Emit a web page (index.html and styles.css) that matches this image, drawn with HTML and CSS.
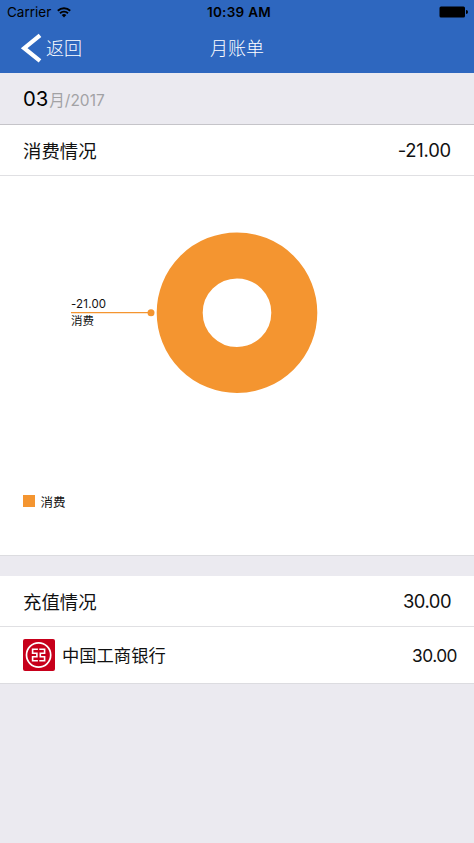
FILE: index.html
```html
<!DOCTYPE html>
<html lang="zh-CN">
<head>
<meta charset="utf-8">
<title>月账单</title>
<link rel="stylesheet" href="styles.css">
</head>
<body>
<header class="top">
  <div class="status">
    <div class="carrier"><span>Carrier</span>
      <svg class="wifi" width="14" height="11" viewBox="0 0 14 11"><path d="M.8 3.8a9 9 0 0 1 12.4 0M3 6.2a5.8 5.8 0 0 1 8 0" fill="none" stroke="#000" stroke-width="1.9"/><path d="M4.7 8.1a3.3 3.3 0 0 1 4.6 0L7 10.5z"/></svg>
    </div>
    <div class="time">10:39 AM</div>
    <svg class="battery" width="29" height="12" viewBox="0 0 29 12"><rect x=".5" y=".5" width="25.5" height="11" rx="1.5"/><path d="M27 4a2 2 0 0 1 0 4z"/></svg>
  </div>
  <nav class="nav">
    <div class="back"><svg width="22" height="30" viewBox="0 0 22 30"><path d="M20 2.4 4.2 15.2l15.8 12.6" fill="none" stroke="#fff" stroke-width="4.2"/></svg><span>返回</span></div>
    <h1 class="title">月账单</h1>
  </nav>
</header>
<div class="date"><span class="month">03</span><span class="year">月/2017</span></div>
<section class="card">
  <div class="head"><span class="name">消费情况</span><span class="amount spent">-21.00</span></div>
  <div class="chart">
    <svg width="474" height="300" viewBox="0 176 474 300">
      <circle cx="237" cy="312.7" r="57.3" fill="none" stroke="#f49530" stroke-width="46"/>
      <path d="M71 312.7h80" stroke="#f49530" stroke-width="1.3"/>
      <circle cx="151" cy="312.7" r="3.5" fill="#f49530"/>
      <text class="value" x="71" y="308">-21.00</text>
      <text class="label" x="71" y="325.3">消费</text>
    </svg>
    <div class="legend"><i class="swatch"></i><span>消费</span></div>
  </div>
</section>
<section class="card recharge">
  <div class="head"><span class="name">充值情况</span><span class="amount">30.00</span></div>
  <div class="row">
    <svg class="logo" width="32" height="32" viewBox="0 0 32 32"><rect width="32" height="32" rx="2" fill="#c7001b"/><g fill="none" stroke="#fff"><circle cx="15.6" cy="16" r="12.1" stroke-width="1.7"/><path d="M14.9 10.2H9.6v4h4.3v3.6H9.6v4h5.3M16.3 10.2h5.3v4h-4.3v3.6h4.3v4h-5.3" stroke-width="1.6"/></g></svg>
    <span class="bank">中国工商银行</span><span class="amount">30.00</span>
  </div>
</section>
</body>
</html>
```
FILE: styles.css
```css
* { box-sizing: border-box; }
body {
  margin: 0;
  min-height: 843px;
  background: #ebeaf0;
  color: #111;
  font-family: Inter, "Noto Sans CJK SC", sans-serif;
  font-size: 18.4px;
}
svg { display: block; flex: none; }
.top { height: 73px; background: #2e67bf; }
.status {
  height: 24px;
  padding: 0 6px 0 7px;
  display: grid;
  grid-template-columns: 1fr auto 1fr;
  align-items: center;
  color: #000;
  font-size: 13.5px;
}
.carrier { display: flex; align-items: center; gap: 6px; }
.time { padding-left: 3px; font-weight: 600; letter-spacing: .3px; }
.battery { justify-self: end; }
.nav {
  height: 47px;
  padding-left: 20px;
  display: grid;
  grid-template-columns: 190px 1fr;
  align-items: center;
  color: #fff;
  font-weight: 300;
}
.back { display: flex; align-items: center; gap: 4px; font-size: 18px; }
.back svg { margin-top: 1px; }
.back span, .title { padding-bottom: 2px; }
.title { margin: 0; font-size: 18px; font-weight: 300; }
.date {
  height: 52px;
  padding: 0 23px;
  display: flex;
  align-items: baseline;
  line-height: 51px;
  border-bottom: 1px solid #c5c4c9;
}
.month { font-size: 20.3px; color: #000; }
.year { margin-left: 1px; font-size: 15.5px; color: #a2a2a5; }
.card { background: #fff; border-bottom: 1px solid #dcdce0; }
.head {
  height: 51px;
  padding: 0 23px;
  display: flex;
  align-items: center;
  justify-content: space-between;
  border-bottom: 1px solid #e0e0e3;
}
.name { padding-bottom: 1px; }
.bank { padding-bottom: 2px; }
.amount { letter-spacing: -.5px; }
.spent { letter-spacing: -.2px; }
.chart { height: 379px; }
.value, .label { font-size: 11.5px; fill: #111; }
.value { letter-spacing: .2px; }
.legend {
  height: 50px;
  padding-left: 23px;
  display: flex;
  align-items: center;
  gap: 6px;
  font-size: 12.5px;
}
.swatch { width: 11.5px; height: 11.5px; background: #f49530; }
.recharge { margin-top: 20px; }
.row {
  height: 56px;
  padding: 0 17px 0 23px;
  display: flex;
  align-items: center;
  font-size: 17.3px;
}
.bank { margin-left: 7px; }
.row .amount { margin-left: auto; }
```
